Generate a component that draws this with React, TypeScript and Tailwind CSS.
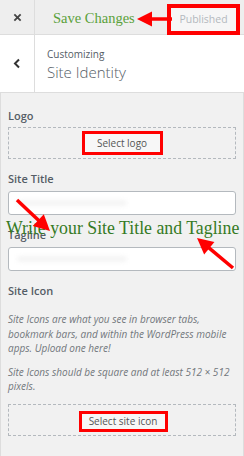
import React from "react";

function Arrow(props: { x1: number; y1: number; x2: number; y2: number; head?: number }) {
  const { x1, y1, x2, y2 } = props;
  const head = props.head ?? 14;
  const dx = x2 - x1;
  const dy = y2 - y1;
  const len = Math.sqrt(dx * dx + dy * dy);
  const ux = dx / len;
  const uy = dy / len;
  const bx = x2 - ux * head;
  const by = y2 - uy * head;
  const w = head * 0.5;
  const pts = `${x2},${y2} ${bx - uy * w},${by + ux * w} ${bx + uy * w},${by - ux * w}`;
  return (
    <g>
      <line x1={x1} y1={y1} x2={bx + ux * 2} y2={by + uy * 2} stroke="#ff0000" strokeWidth={3.5} />
      <polygon points={pts} fill="#ff0000" />
    </g>
  );
}

function Label(props: { children: React.ReactNode }) {
  return <div className="text-[11px] leading-[15px] font-semibold text-[#555d66]">{props.children}</div>;
}

function TextBox() {
  return (
    <div className="h-[24px] rounded-[3px] border border-[#b4b9be] bg-white px-[8px] flex items-center">
      <div className="h-[6px] w-[110px] rounded-full bg-[#f4f4f4] blur-[2px]" />
    </div>
  );
}

function MediaBox(props: { label: string; boxClass: string }) {
  return (
    <div className="flex h-[32px] items-center justify-center border border-dashed border-[#b4b9be]">
      <div className={`flex items-center justify-center border-[3px] border-[#ff0000] bg-[#f7f7f7] text-[10px] text-[#555] ${props.boxClass}`}>
        {props.label}
      </div>
    </div>
  );
}

export default function App() {
  return (
    <div className="relative h-[456px] w-[244px] overflow-hidden bg-[#f1f1f1] font-['Open_Sans',sans-serif]">
      {/* top bar */}
      <div className="flex h-[35px] border-b border-[#dddddd] bg-[#eeeeee]">
        <div className="flex w-[35px] items-center justify-center border-r border-[#dddddd]">
          <svg width="9" height="9" viewBox="0 0 10 10">
            <path d="M1.5 1.5 L8.5 8.5 M8.5 1.5 L1.5 8.5" stroke="#444" strokeWidth="2" />
          </svg>
        </div>
        <div className="flex flex-1 items-start justify-between">
          <span className="ml-[18px] mt-[8px] font-['Liberation_Serif',serif] text-[14.5px] leading-[20px] text-[#5aa13a]">
            Save Changes
          </span>
          <div className="mr-[4px] mt-[4px] flex h-[31px] w-[73px] items-center justify-center border-[4px] border-[#ff0000] bg-[#f6f6f6]">
            <span className="text-[10.5px] text-[#b4b9be]">Published</span>
          </div>
        </div>
      </div>

      {/* section header */}
      <div className="flex h-[58px] border-b border-[#dddddd] bg-white">
        <div className="flex w-[35px] items-center justify-center border-r border-[#dddddd]">
          <svg width="8" height="11" viewBox="0 0 8 11">
            <path d="M6 1.5 L2 5.5 L6 9.5" stroke="#333" strokeWidth="2" fill="none" />
          </svg>
        </div>
        <div className="flex flex-col justify-center pl-[12px] pt-[3px]">
          <span className="text-[10px] leading-[13px] text-[#555d66]">Customizing</span>
          <span className="text-[15px] leading-[22px] font-light text-[#555d66]">Site Identity</span>
        </div>
      </div>

      {/* controls */}
      <div className="flex h-full flex-col border-x border-[#dddddd] px-[7px] pt-[15px]">
        <Label>Logo</Label>
        <div className="mt-[4px]">
          <MediaBox label="Select logo" boxClass="h-[24px] w-[81px]" />
        </div>

        <div className="mt-[12px]">
          <Label>Site Title</Label>
        </div>
        <div className="mt-[5px]">
          <TextBox />
        </div>

        <div className="mt-[12px]">
          <Label>Tagline</Label>
        </div>
        <div className="mt-[5px]">
          <TextBox />
        </div>

        <div className="mt-[12px]">
          <Label>Site Icon</Label>
        </div>
        <p className="mt-[14px] text-[10px] italic leading-[14.5px] text-[#72777c]">
          Site Icons are what you see in browser tabs, bookmark bars, and within the WordPress mobile apps. Upload one here!
        </p>
        <p className="mt-[9px] text-[10px] italic leading-[14.5px] text-[#72777c]">
          Site Icons should be square and at least 512 × 512 pixels.
        </p>
        <div className="mt-[10px]">
          <MediaBox label="Select site icon" boxClass="h-[21px] w-[89px] mt-[4px] ml-[2px]" />
        </div>
      </div>

      {/* annotations */}
      <div className="pointer-events-none absolute left-[6px] top-[217px] whitespace-nowrap font-['Liberation_Serif',serif] text-[17.8px] leading-[22px] text-[#357a24]">
        Write your Site Title and Tagline
      </div>
      <svg className="pointer-events-none absolute left-0 top-0" width="244" height="456">
        <Arrow x1={172} y1={19} x2={137} y2={19} head={15} />
        <Arrow x1={17} y1={200} x2={50} y2={231} head={16} />
        <Arrow x1={233} y1={268} x2={197} y2={238} head={16} />
      </svg>
    </div>
  );
}
